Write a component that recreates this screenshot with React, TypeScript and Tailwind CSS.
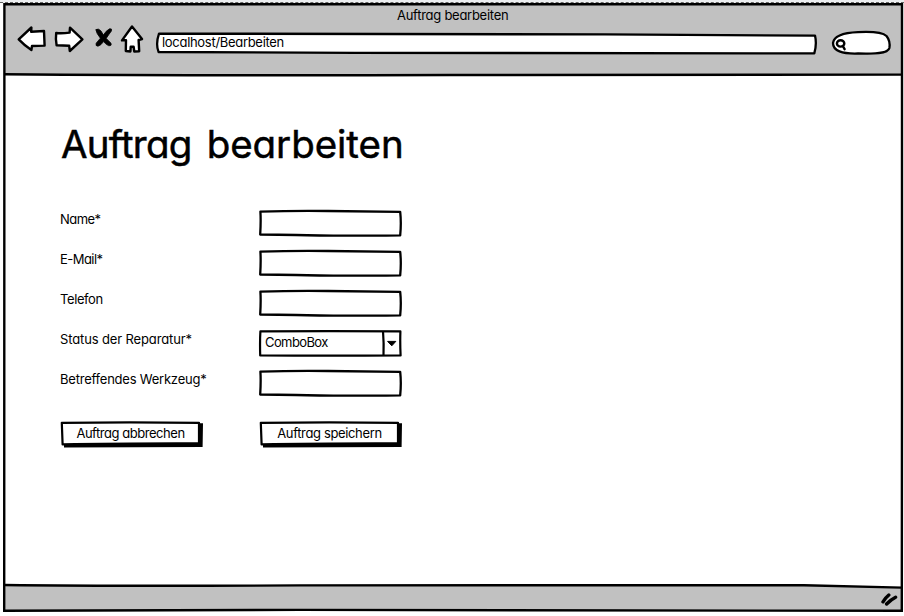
import type { ReactNode } from "react";

const label =
  "font-['Inter','Noto_Sans',sans-serif] [font-feature-settings:'cv11','ss03'] text-[13px] leading-[18px] text-black whitespace-nowrap";

function TextBox() {
  return (
    <div className="relative h-7 w-[144px]">
      <svg className="absolute inset-0" width="144" height="28" viewBox="0 0 144 28" fill="white" stroke="black" strokeWidth="2.3" strokeLinejoin="round">
        <path d="M2.4 2.6 Q35 1.6 70 2 L142.2 2.9 Q143.4 14 142.2 26.3 Q75 27.2 38 26 L2.2 25.5 Q3 12 2.4 2.6Z" />
      </svg>
    </div>
  );
}

function ComboBox() {
  return (
    <div className="relative flex h-7 w-[144px]">
      <svg className="absolute inset-0" width="144" height="28" viewBox="0 0 144 28" fill="white" stroke="black" strokeWidth="2.2" strokeLinejoin="round">
        <path d="M2.4 2.4 Q70 1.8 142.4 2.4 Q142 14 142.6 26.4 Q70 26.9 2.2 26.4 Q1.8 12 2.4 2.4Z" />
        <path d="M125 2 Q126 15 125.5 26" fill="none" />
        <path d="M129.6 12.4h8.2l-4 4.4z" fill="black" strokeWidth="1" />
      </svg>
      <span className={`${label} relative ml-[7px] mt-[4px] tracking-[-0.6px]`}>ComboBox</span>
    </div>
  );
}

function SketchButton({ children }: { children: ReactNode }) {
  return (
    <button className="relative flex h-7 w-[144px] justify-center pr-[3px] pt-[4px]">
      <svg className="absolute inset-0" width="144" height="28" viewBox="0 0 144 28">
        <path d="M4 22 L139 22 L139 3.3 H143 L142.6 27 L4 27.4Z" fill="black" />
        <path d="M1.8 2.8 Q70 2 139 2.8 L139 23.4 Q60 23.2 2.6 24.4Z" fill="white" stroke="black" strokeWidth="2.2" strokeLinejoin="round" />
      </svg>
      <span className={`${label} relative`}>{children}</span>
    </button>
  );
}

function Row({ name, children }: { name: ReactNode; children: ReactNode }) {
  return (
    <div className="flex h-10 items-start">
      <div className="flex w-[198px] pt-px">{name}</div>
      {children}
    </div>
  );
}

export default function App() {
  return (
    <div className="relative flex h-[616px] w-[904px] flex-col overflow-hidden bg-white">
      <div className="h-[3px] shrink-0 border-b border-dashed border-[#666] bg-[#eceef0]" />
      <header className="ml-[4px] mr-[2px] flex h-[71px] shrink-0 flex-col bg-[#c1c1c1]">
        <div className={`${label} ml-[393px] mt-[3px] tracking-[-0.27px]`}>Auftrag bearbeiten</div>
        <div className="mt-px flex h-[36px] items-center">
          <svg width="146" height="36" viewBox="4 25 146 36" fill="white" stroke="black" strokeWidth="2.4" strokeLinejoin="round">
            <path d="M18.7 39.4 L31.4 27.5 L31.2 31.8 L44 31 L44.6 45.6 L32 46 L31.4 50 Q24 45 18.7 39.4Z" />
            <path d="M56.2 33 Q62 33.6 69.6 32.6 L70 27.6 L82.4 39.4 L69.8 51 L69.2 45.8 L56.6 45.3 Q55.4 39 56.2 33Z" />
            <path d="M95.8 29.6 Q98.4 28 101 31 L103.4 35 Q106 30.6 109.6 28.8 Q112.4 28.2 111.4 31 Q108.6 34.8 106.2 38.4 L111 43.2 Q112 46.2 108.4 45.6 Q105.4 44 103.6 41.6 Q101 45.4 98 46.2 Q95.2 46.2 96.2 43.2 L100.4 38.2 Q96.4 33.4 95.8 29.6Z" fill="black" strokeWidth="0.8" />
            <path d="M132 26.5 L142 39 L138.6 40 L139.2 51.2 L134.3 51.5 L133.6 46.8 L130.7 46.8 L130.4 51.5 L125.8 51 L126 40.3 L122 40.4 Q127 33.5 132 26.5Z" />
          </svg>
          <div className="relative ml-[5px] flex h-6 w-[663px] items-center">
            <svg className="absolute inset-0" width="663" height="24" viewBox="0 0 663 24" fill="white" stroke="black" strokeWidth="2.3" strokeLinejoin="round">
              <path d="M4 2.6 Q250 2.2 450 3.4 L660 4.6 Q662 13 659.3 22.4 Q400 22.7 200 21.8 L3.6 21 Q0.4 13 4 2.6Z" />
            </svg>
            <span className={`${label} relative ml-[7px] mt-[-3px] tracking-[-0.3px]`}>localhost/Bearbeiten</span>
          </div>
          <svg className="ml-[12px]" width="62" height="30" viewBox="830 28 62 30" fill="white" stroke="black" strokeWidth="2.3">
            <path d="M833 43 C834 36 842 32.8 858 32.2 Q881 31 886.5 36 Q890.5 41 889.4 48 C888 54 873 54 858 53.5 C842 54 833 51 833 43Z" />
            <ellipse cx="840.6" cy="43.4" rx="3.7" ry="3.2" strokeWidth="2.4" />
            <path d="M842.8 46 L844.6 49.2" strokeWidth="2.4" strokeLinecap="round" />
          </svg>
        </div>
      </header>
      <main className="flex h-[511px] shrink-0 flex-col pl-[60px]">
        <h1 className="ml-px mt-[46px] flex h-[48px] gap-[15px] whitespace-nowrap font-['Inter','Noto_Sans',sans-serif] text-[38.5px] font-normal leading-[48px] text-black [-webkit-text-stroke:0.5px_black] [font-feature-settings:'cv11','ss03'] [stroke-linejoin:round]">
          <span className="tracking-[-0.75px]">Auftrag </span>
          <span className="tracking-[-0.05px]">bearbeiten</span>
        </h1>
        <div className="mt-[41px] flex flex-col">
          <Row name={<span className={`${label} tracking-[-0.55px]`}>Name*</span>}><TextBox /></Row>
          <Row name={<span className={`${label} tracking-[-0.55px]`}>E-Mail*</span>}><TextBox /></Row>
          <Row name={<span className={`${label} tracking-[-0.4px]`}>Telefon</span>}><TextBox /></Row>
          <Row name={<span className={`${label} tracking-[-0.13px]`}>Status der Reparatur*</span>}><ComboBox /></Row>
          <Row name={<span className={`${label} tracking-[-0.22px]`}>Betreffendes Werkzeug*</span>}><TextBox /></Row>
        </div>
        <div className="mt-[11px] flex gap-[55px]">
          <SketchButton><span className="tracking-[-0.46px]">Auftrag abbrechen</span></SketchButton>
          <SketchButton><span className="tracking-[-0.36px]">Auftrag speichern</span></SketchButton>
        </div>
      </main>
      <footer className="ml-[4px] mr-[2px] flex h-[26px] shrink-0 items-center justify-end bg-[#c1c1c1] pr-[3px]">
        <svg width="18" height="16" viewBox="0 0 18 16" fill="none" stroke="black" strokeWidth="3.4" strokeLinecap="round">
          <path d="M2 11.8 Q4.6 7.6 7.8 5" />
          <path d="M5.6 14 Q9.8 9.6 14.6 7.2" />
        </svg>
      </footer>
      <svg className="pointer-events-none absolute inset-0" width="904" height="616" viewBox="0 0 904 616" fill="none" stroke="black" strokeWidth="2.4">
        <path d="M902 587.7 L804 585.2 L902 584 V587.7Z" fill="white" stroke="none" />
        <path d="M4.4 4.2 H902 Q901.4 200 902 400 L901.8 610.8 Q600 610.2 300 609.9 Q120 610.6 4.2 610.8 Q4.6 300 4.4 4.2Z" />
        <path d="M4 74.2 Q200 75.8 450 75 Q700 74.2 902 74.6" />
        <path d="M4 585 Q120 586.4 300 585.4 Q600 584.6 804 585.2 L902 587.6" />
      </svg>
    </div>
  );
}
